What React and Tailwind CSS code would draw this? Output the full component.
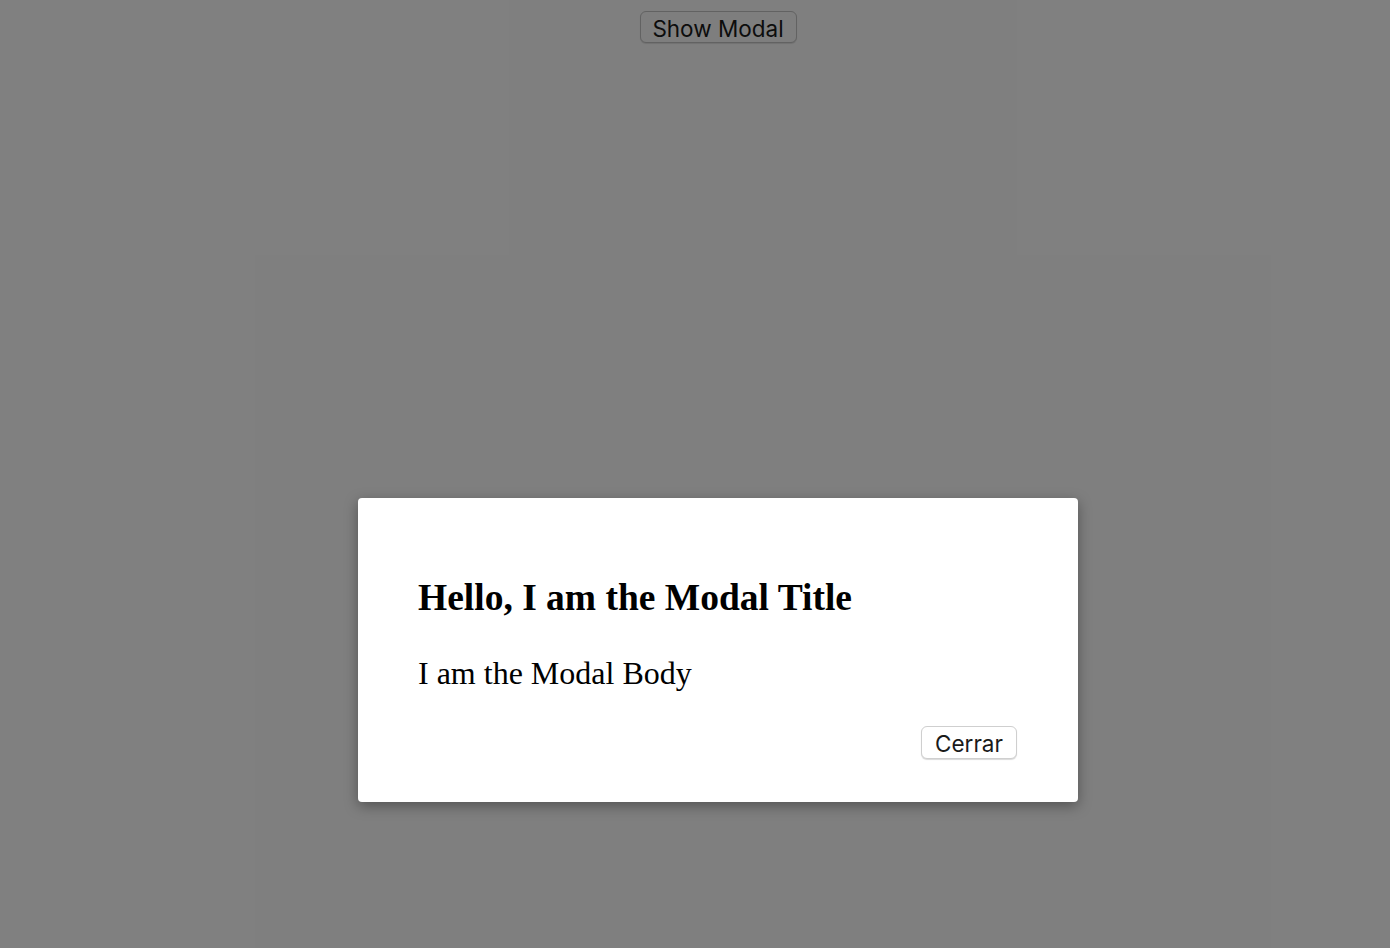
export default function App() {
  return (
    <div className="relative h-[948px] w-full overflow-hidden bg-white">
      {/* page content under the backdrop */}
      <div className="flex justify-center pt-[11px] pl-[46px]">
        <button
          type="button"
          className="h-[32px] w-[157px] rounded-[6px] border border-[#c4c4c4] bg-[#fdfdfd] text-[22.5px] text-[#1a1a1a] shadow-[0_1px_1px_rgba(0,0,0,0.12)]"
          style={{ fontFamily: "Inter, 'Open Sans', sans-serif" }}
        >
          Show Modal
        </button>
      </div>

      {/* backdrop */}
      <div className="absolute inset-0 bg-black/50" />

      {/* modal */}
      <div className="absolute left-[358px] top-[498px] w-[720px] rounded-[4px] bg-white px-[60px] pt-[79px] pb-[43px] shadow-[0_4px_14px_rgba(0,0,0,0.35)]">
        <h2
          className="text-[37.5px] font-bold leading-[41px] text-black"
          style={{ fontFamily: "'Liberation Serif', serif" }}
        >
          Hello, I am the Modal Title
        </h2>
        <p
          className="mt-[37px] text-[32px] leading-[36px] text-black"
          style={{ fontFamily: "'Liberation Serif', serif" }}
        >
          I am the Modal Body
        </p>
        <div className="mt-[35px] flex justify-end pr-[1px]">
          <button
            type="button"
            className="h-[33px] w-[96px] rounded-[6px] border border-[#cfcfcf] bg-white text-[22.5px] text-[#1a1a1a] shadow-[0_1px_1px_rgba(0,0,0,0.15)]"
            style={{ fontFamily: "Inter, 'Open Sans', sans-serif" }}
          >
            Cerrar
          </button>
        </div>
      </div>
    </div>
  );
}
